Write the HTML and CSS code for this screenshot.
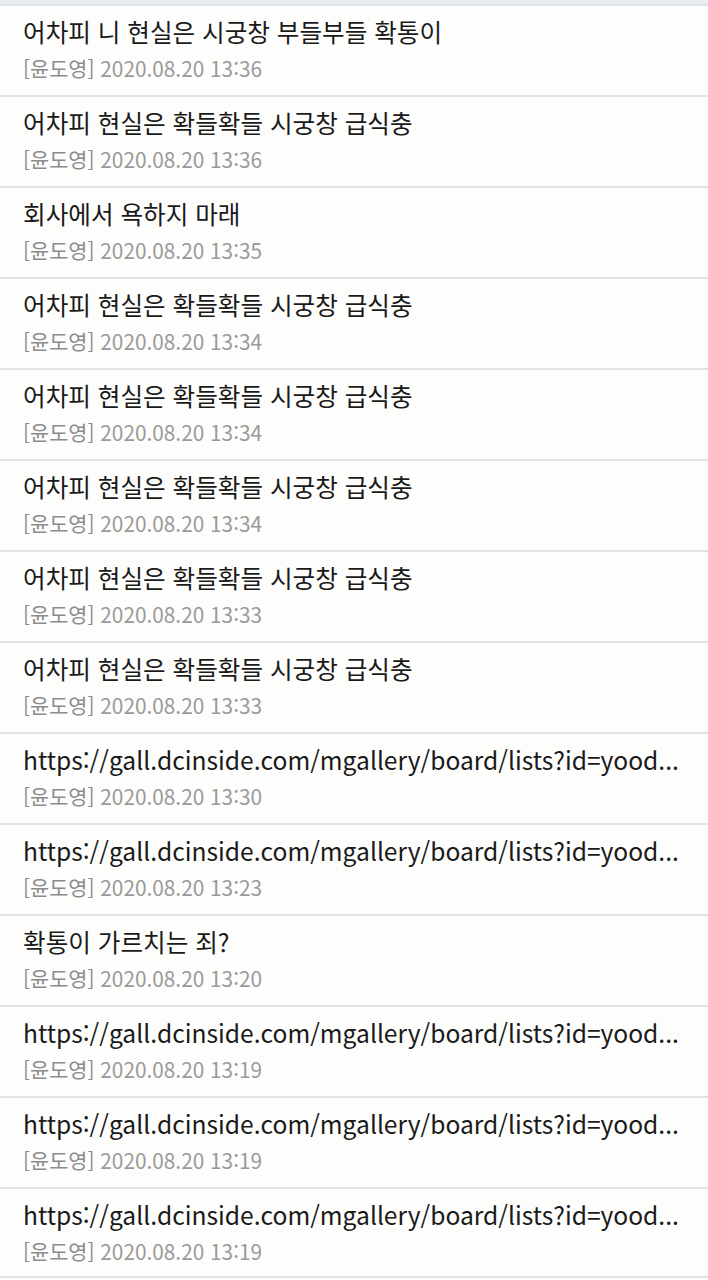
FILE: index.html
```html
<!DOCTYPE html>
<html lang="ko">
<head>
    <meta charset="UTF-8">
    <meta name="viewport" content="width=device-width, initial-scale=1.0">
    <title>메모 목록</title>
    <link rel="stylesheet" href="styles.css">
</head>
<body>
    <div class="top-bar"></div>
    <ul class="memo-list" id="memoList">
        <li class="memo"><div class="memo-title">어차피 니 현실은 시궁창 부들부들 확통이</div><div class="memo-meta"><span class="author">[윤도영]</span> 2020.08.20 13:36</div></li>
        <li class="memo"><div class="memo-title">어차피 현실은 확들확들 시궁창 급식충</div><div class="memo-meta"><span class="author">[윤도영]</span> 2020.08.20 13:36</div></li>
        <li class="memo"><div class="memo-title">회사에서 욕하지 마래</div><div class="memo-meta"><span class="author">[윤도영]</span> 2020.08.20 13:35</div></li>
        <li class="memo"><div class="memo-title">어차피 현실은 확들확들 시궁창 급식충</div><div class="memo-meta"><span class="author">[윤도영]</span> 2020.08.20 13:34</div></li>
        <li class="memo"><div class="memo-title">어차피 현실은 확들확들 시궁창 급식충</div><div class="memo-meta"><span class="author">[윤도영]</span> 2020.08.20 13:34</div></li>
        <li class="memo"><div class="memo-title">어차피 현실은 확들확들 시궁창 급식충</div><div class="memo-meta"><span class="author">[윤도영]</span> 2020.08.20 13:34</div></li>
        <li class="memo"><div class="memo-title">어차피 현실은 확들확들 시궁창 급식충</div><div class="memo-meta"><span class="author">[윤도영]</span> 2020.08.20 13:33</div></li>
        <li class="memo"><div class="memo-title">어차피 현실은 확들확들 시궁창 급식충</div><div class="memo-meta"><span class="author">[윤도영]</span> 2020.08.20 13:33</div></li>
        <li class="memo"><div class="memo-title">https://gall.dcinside.com/mgallery/board/lists?id=yood...</div><div class="memo-meta"><span class="author">[윤도영]</span> 2020.08.20 13:30</div></li>
        <li class="memo"><div class="memo-title">https://gall.dcinside.com/mgallery/board/lists?id=yood...</div><div class="memo-meta"><span class="author">[윤도영]</span> 2020.08.20 13:23</div></li>
        <li class="memo"><div class="memo-title">확통이 가르치는 죄?</div><div class="memo-meta"><span class="author">[윤도영]</span> 2020.08.20 13:20</div></li>
        <li class="memo"><div class="memo-title">https://gall.dcinside.com/mgallery/board/lists?id=yood...</div><div class="memo-meta"><span class="author">[윤도영]</span> 2020.08.20 13:19</div></li>
        <li class="memo"><div class="memo-title">https://gall.dcinside.com/mgallery/board/lists?id=yood...</div><div class="memo-meta"><span class="author">[윤도영]</span> 2020.08.20 13:19</div></li>
        <li class="memo"><div class="memo-title">https://gall.dcinside.com/mgallery/board/lists?id=yood...</div><div class="memo-meta"><span class="author">[윤도영]</span> 2020.08.20 13:19</div></li>
    </ul>
</body>
</html>
```

FILE: styles.css
```css
body { margin: 0; background: #fdfdfc; font-family: "Noto Sans CJK KR", "Noto Sans", sans-serif; }
.top-bar { height: 4px; background: #e9edf0; }
.memo-list { list-style: none; margin: 0; padding: 0; }
.memo { box-sizing: border-box; height: 91px; padding: 8px 20px 0 23px; border-top: 2px solid #e1e4e7; }
.memo:last-child { border-bottom: 2px solid #e1e4e7; }
.memo-title { font-size: 24.6px; line-height: 34px; color: #1a1a1a; white-space: nowrap; overflow: hidden; text-overflow: ellipsis; }
.memo-meta { margin-top: 4px; font-size: 20.8px; line-height: 32px; color: #9a9a9a; }
.memo-meta .author { color: #8c8c8c; }
```
